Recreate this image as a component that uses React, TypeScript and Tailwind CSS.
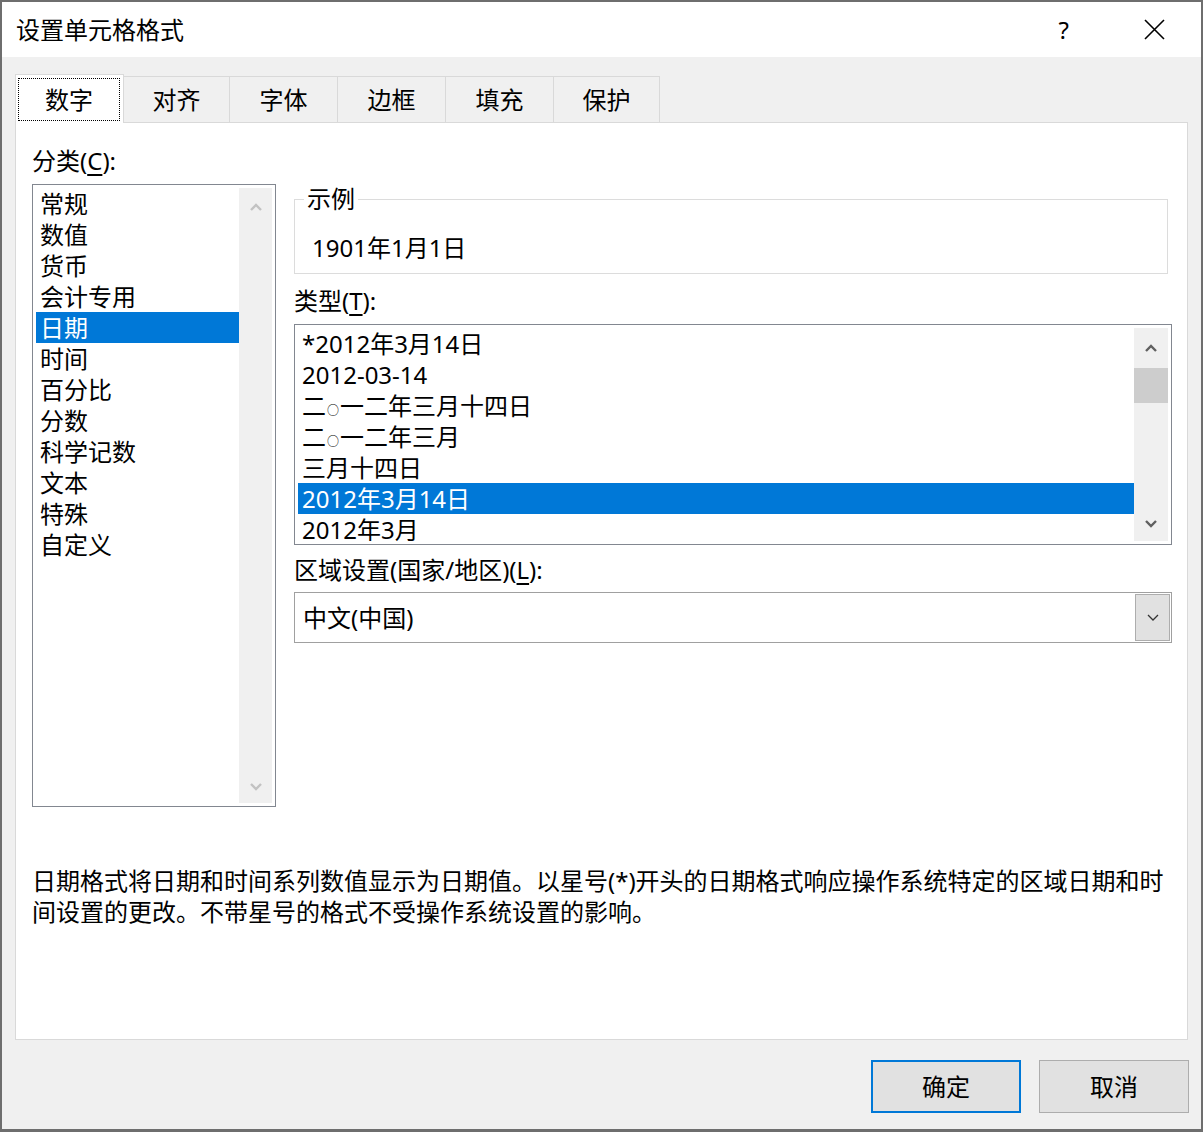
import React from 'react';

const categories = ['常规', '数值', '货币', '会计专用', '日期', '时间', '百分比', '分数', '科学记数', '文本', '特殊', '自定义'];
const tabs = [
    { label: '对齐', w: 'w-[106px]' },
    { label: '字体', w: 'w-[108px]' },
    { label: '边框', w: 'w-[108px]' },
    { label: '填充', w: 'w-[108px]' },
    { label: '保护', w: 'w-[106px]' },
];

// small "○" as in the Windows font
const Ling = () => <span className="text-[12px] mx-[1px]">○</span>;

const types: React.ReactNode[] = [
    '*2012年3月14日',
    '2012-03-14',
    <>二<Ling />一二年三月十四日</>,
    <>二<Ling />一二年三月</>,
    '三月十四日',
    '2012年3月14日',
    '2012年3月',
];

function Chevron({ up, color, w = 12, h = 8, stroke = 2.4 }: { up?: boolean; color: string; w?: number; h?: number; stroke?: number }) {
    return (
        <svg width={w} height={h} viewBox="0 0 12 8" fill="none">
            {up
                ? <path d="M1 7 L6 2 L11 7" stroke={color} strokeWidth={stroke} />
                : <path d="M1 1 L6 6 L11 1" stroke={color} strokeWidth={stroke} />}
        </svg>
    );
}

export default function App() {
    const selectedCategory = '日期';
    const selectedType = 5;

    return (
        <div className="w-[1203px] h-[1132px] bg-[#6e6e6e] pt-[2px] pl-[2px] text-black font-['Noto_Sans','Noto_Sans_CJK_SC',sans-serif] text-[24px] overflow-hidden">
            <div className="w-[1199px] h-[1127px] bg-[#f0f0f0] flex flex-col">
                {/* title bar */}
                <div className="h-[55px] bg-white flex items-center pl-[14px] pr-[36px] shrink-0">
                    <span className="leading-[30px]">设置单元格格式</span>
                    <span className="ml-auto leading-[30px]">?</span>
                    <svg className="ml-[75px]" width="21" height="21" viewBox="0 0 21 21">
                        <path d="M1 1 L20 20 M20 1 L1 20" stroke="#000" strokeWidth="1.6" />
                    </svg>
                </div>

                <div className="px-[13px] flex flex-col">
                    {/* tabs */}
                    <div className="mt-[17px] flex items-end relative z-10">
                        <div className="w-[109px] h-[49px] -mb-px bg-white border border-b-0 border-[#d9d9d9] pt-[3px] pl-[2px] pr-[3px] pb-[2px]">
                            <div className="w-full h-full border border-dotted border-black flex items-center justify-center leading-[30px]">数字</div>
                        </div>
                        {tabs.map(t => (
                            <div key={t.label} className={`${t.w} h-[46px] border-t border-r border-[#d9d9d9] flex items-center justify-center leading-[30px]`}>
                                {t.label}
                            </div>
                        ))}
                    </div>

                    {/* panel */}
                    <div className="h-[918px] bg-white border border-[#d9d9d9] pl-[16px] pr-[15px] pt-[23px] flex flex-col">
                        <div className="flex gap-[18px]">
                            {/* category column */}
                            <div className="flex flex-col">
                                <div className="leading-[30px]">分类(<span className="underline underline-offset-[4px]">C</span>):</div>
                                <div className="mt-[8px] w-[244px] h-[623px] border border-[#828790] bg-white p-[3px] flex">
                                    <div className="flex-1 flex flex-col">
                                        {categories.map(c => (
                                            <div key={c} className={`h-[31px] leading-[31px] pl-[4px] ${c === selectedCategory ? 'bg-[#0078d7] text-white' : ''}`}>{c}</div>
                                        ))}
                                    </div>
                                    <div className="w-[33px] bg-[#f0f0f0] flex flex-col items-center">
                                        <div className="h-[38px] flex items-center"><Chevron up color="#c2c2c2" /></div>
                                        <div className="flex-1" />
                                        <div className="h-[32px] flex items-center"><Chevron color="#c2c2c2" /></div>
                                    </div>
                                </div>
                            </div>

                            {/* right column */}
                            <div className="flex-1 flex flex-col pt-[38px]">
                                <fieldset className="w-[874px] border border-[#dcdcdc] px-[18px] pb-[10px]">
                                    <legend className="ml-[-9px] px-[3px] leading-[30px]">示例</legend>
                                    <div className="mt-[19px] leading-[30px] -ml-px">1901年1月1日</div>
                                </fieldset>

                                <div className="mt-[12px] leading-[30px]">类型(<span className="underline underline-offset-[4px]">T</span>):</div>
                                <div className="mt-[8px] h-[221px] border border-[#828790] bg-white p-[3px] flex">
                                    <div className="flex-1 flex flex-col overflow-hidden">
                                        {types.map((t, i) => (
                                            <div key={i} className={`h-[31px] shrink-0 leading-[31px] pl-[4px] ${i === selectedType ? 'bg-[#0078d7] text-white' : ''}`}>{t}</div>
                                        ))}
                                    </div>
                                    <div className="w-[34px] bg-[#f0f0f0] flex flex-col items-center">
                                        <div className="h-[40px] flex items-center"><Chevron up color="#606060" /></div>
                                        <div className="w-full h-[35px] bg-[#cdcdcd]" />
                                        <div className="flex-1" />
                                        <div className="h-[34px] flex items-center"><Chevron color="#606060" /></div>
                                    </div>
                                </div>

                                <div className="mt-[10px] leading-[30px]">区域设置(国家/地区)(<span className="underline underline-offset-[4px]">L</span>):</div>
                                <div className="mt-[7px] h-[51px] border border-[#a0a0a0] bg-white p-[1px] flex items-stretch">
                                    <div className="flex-1 flex items-center pl-[7px] leading-[30px]">中文(中国)</div>
                                    <div className="w-[35px] bg-[#e1e1e1] border border-[#adadad] flex items-center justify-center">
                                        <Chevron color="#333333" w={14} h={8} stroke={1.3} />
                                    </div>
                                </div>
                            </div>
                        </div>

                        <div className="mt-[58px] leading-[31px]">
                            <div>日期格式将日期和时间系列数值显示为日期值。以星号(*)开头的日期格式响应操作系统特定的区域日期和时</div>
                            <div>间设置的更改。不带星号的格式不受操作系统设置的影响。</div>
                        </div>
                    </div>

                    {/* buttons */}
                    <div className="mt-[20px] flex justify-end gap-[18px] -mr-px">
                        <button className="w-[150px] h-[53px] bg-[#e1e1e1] border-2 border-[#0078d7] leading-[30px]">确定</button>
                        <button className="w-[150px] h-[53px] bg-[#e1e1e1] border border-[#adadad] leading-[30px]">取消</button>
                    </div>
                </div>
            </div>
        </div>
    );
}
